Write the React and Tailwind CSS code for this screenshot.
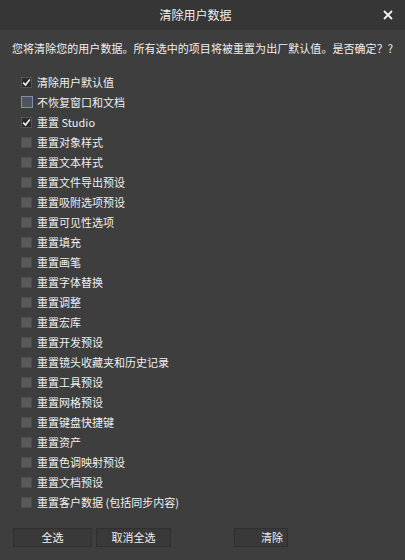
import React from "react";

const items = [
  ["清除用户默认值", "checked"],
  ["不恢复窗口和文档", "focus"],
  ["重置 Studio", "checked"],
  ["重置对象样式"],
  ["重置文本样式"],
  ["重置文件导出预设"],
  ["重置吸附选项预设"],
  ["重置可见性选项"],
  ["重置填充"],
  ["重置画笔"],
  ["重置字体替换"],
  ["重置调整"],
  ["重置宏库"],
  ["重置开发预设"],
  ["重置镜头收藏夹和历史记录"],
  ["重置工具预设"],
  ["重置网格预设"],
  ["重置键盘快捷键"],
  ["重置资产"],
  ["重置色调映射预设"],
  ["重置文档预设"],
  ["重置客户数据 (包括同步内容)"],
];

function Box({ state }) {
  if (state === "checked") {
    return (
      <div className="w-[11px] h-[11px] bg-[#2c2c2c] border border-[#555] flex items-center justify-center">
        <svg width="9" height="9" viewBox="0 0 9 9">
          <path d="M1.2 4.6 L3.5 7 L7.8 1.6" fill="none" stroke="#f2f2f2" strokeWidth="1.6" />
        </svg>
      </div>
    );
  }
  if (state === "focus") {
    return <div className="w-[12px] h-[12px] bg-[#50545c] border border-[#7d8fb0]" />;
  }
  return <div className="w-[11px] h-[11px] bg-[#5a5a5a] border border-[#4e4e4e]" />;
}

export default function App() {
  return (
    <div
      className="w-[405px] h-[560px] bg-[#3e3e3e] text-[#e8e8e8] flex flex-col overflow-hidden"
      style={{ fontFamily: '"Noto Sans CJK SC", "Noto Sans", sans-serif' }}
    >
      <div className="h-[30px] bg-[#363636] flex items-center relative">
        <div className="flex-1 text-center text-[12px] pr-[14px] text-[#eeeeee]">清除用户数据</div>
        <svg className="absolute right-[12px] top-[10px]" width="10" height="10" viewBox="0 0 10 10">
          <path d="M1 1 L9 9 M9 1 L1 9" stroke="#f0f0f0" strokeWidth="1.8" />
        </svg>
      </div>
      <div className="h-[36px] flex items-center pl-[12px] text-[11px] whitespace-nowrap tracking-[0.05px] text-[#efefef]">
        您将清除您的用户数据。所有选中的项目将被重置为出厂默认值。是否确定？?
      </div>
      <div className="flex flex-col pt-[6px]">
        {items.map(([label, state]) => (
          <div key={label} className="h-[20px] flex items-center pl-[21px] gap-[4px]">
            <div className="w-[12px] flex items-center justify-start">
              <Box state={state} />
            </div>
            <span className="text-[11px] text-[#efefef]">{label}</span>
          </div>
        ))}
      </div>
      <div className="flex items-start pl-[13px] pt-[16px]">
        <button className="w-[79px] h-[19px] bg-[#393939] border border-[#303030] text-[11px] text-[#eeeeee] flex items-center justify-center">
          全选
        </button>
        <button className="ml-[4px] w-[75px] h-[19px] bg-[#393939] border border-[#303030] text-[11px] text-[#eeeeee] flex items-center justify-center">
          取消全选
        </button>
        <button className="ml-[63px] w-[54px] h-[19px] bg-[#393939] border border-[#303030] text-[11px] text-[#eeeeee] flex items-center justify-end pr-[4px]">
          清除
        </button>
      </div>
    </div>
  );
}
